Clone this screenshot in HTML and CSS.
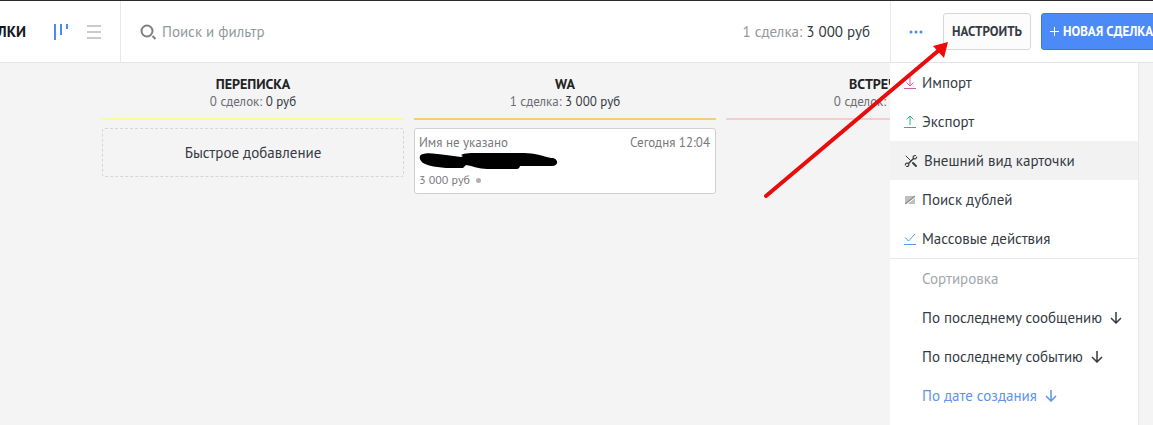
FILE: index.html
```
<!DOCTYPE html>
<html lang="ru">
<head>
  <meta charset="UTF-8" />
  <meta name="viewport" content="width=device-width, initial-scale=1.0" />
  <title>Сделки</title>
  <link rel="stylesheet" href="styles.css">
</head>
<body>
  <header class="topbar">
    <div class="topbar-left">
      <h1 class="title">ЛКИ</h1>
      <button class="view-btn" aria-label="Воронка">
        <svg width="16" height="18" viewBox="0 0 16 18" fill="none" stroke="#4c8bf7" stroke-width="2"><path d="M2 1v16M8 1v11M14 1v5"/></svg>
      </button>
      <button class="view-btn" aria-label="Список">
        <svg width="14" height="14" viewBox="0 0 14 14" fill="none" stroke="#c9cccf" stroke-width="2"><path d="M0 1h14M0 7h14M0 13h14"/></svg>
      </button>
    </div>
    <div class="search">
      <svg width="17" height="16" viewBox="0 0 17 16" fill="none" stroke="#7d7f82" stroke-width="2"><circle cx="7" cy="7" r="5.5"/><path d="M12.5 12l3 3"/></svg>
      <input type="text" class="search-input" placeholder="Поиск и фильтр" aria-label="Поиск и фильтр" />
      <div class="total">1 сделка: <span>3 000 руб</span></div>
    </div>
    <div class="actions">
      <button class="more" aria-label="Ещё">
        <svg width="14" height="4" viewBox="0 0 14 4" fill="#4c8bf7"><circle cx="2" cy="2" r="1.5"/><circle cx="7" cy="2" r="1.5"/><circle cx="12" cy="2" r="1.5"/></svg>
      </button>
      <button class="btn">НАСТРОИТЬ</button>
      <button class="btn btn-primary">
        <svg width="9" height="9" viewBox="0 0 9 9" stroke="#fff"><path d="M4.5 0v9M0 4.5h9"/></svg>
        НОВАЯ СДЕЛКА
      </button>
    </div>

    <nav class="menu">
      <button class="menu-item">
        <svg width="12" height="14" viewBox="0 0 12 14" fill="none" stroke="#cf5fa6"><path d="M6 1v9M2.5 6.5L6 10l3.5-3.5M0 12.5h12"/></svg>
        Импорт
      </button>
      <button class="menu-item">
        <svg width="12" height="14" viewBox="0 0 12 14" fill="none" stroke="#2fb18a"><path d="M6 10V1M2.5 4.5L6 1l3.5 3.5M0 12.5h12"/></svg>
        Экспорт
      </button>
      <button class="menu-item active">
        <svg width="14" height="14" viewBox="0 0 14 14" fill="none" stroke="#3a3c3f" stroke-linecap="round"><path d="M2 2l4.500 4.500" stroke-width="1"/><path d="M9 9l3 3" stroke-width="2"/><path d="M4.500 9.500L9.500 4.500" stroke-width="1.500"/><path d="M11.500 1.500C9.500 1.500 8.500 3 9.500 4.500c1.500 1 3 0 3.200-1.500M4.500 9.500C3 8.500 1.500 9.500 1.300 11M2.500 12.500c2 0 3-1.500 2-3" stroke-width="1.200"/></svg>
        Внешний вид карточки
      </button>
      <button class="menu-item">
        <svg width="12" height="14" viewBox="0 0 12 14"><path d="M1 3h10v8H1z" fill="#bcbebf"/><path d="M1 11L11 3" stroke="#77797c"/><path d="M2.500 11.500L12 4" stroke="#fff"/></svg>
        Поиск дублей
      </button>
      <button class="menu-item">
        <svg width="12" height="14" viewBox="0 0 12 14" fill="none" stroke="#5f94e6"><path d="M1 5.500l3.500 3.500L11 2M0 12.500h12"/></svg>
        Массовые действия
      </button>
      <div class="sort">
        <div class="sort-title">Сортировка</div>
        <button class="sort-item">По последнему сообщению
          <svg width="12" height="13" viewBox="0 0 12 13" fill="none" stroke="currentColor" stroke-width="1.500"><path d="M6 1v11M1 7l5 5 5-5"/></svg>
        </button>
        <button class="sort-item">По последнему событию
          <svg width="12" height="13" viewBox="0 0 12 13" fill="none" stroke="currentColor" stroke-width="1.500"><path d="M6 1v11M1 7l5 5 5-5"/></svg>
        </button>
        <button class="sort-item selected">По дате создания
          <svg width="12" height="13" viewBox="0 0 12 13" fill="none" stroke="currentColor" stroke-width="1.500"><path d="M6 1v11M1 7l5 5 5-5"/></svg>
        </button>
      </div>
    </nav>

    <svg class="arrow" width="184" height="158" viewBox="0 0 184 158"><path d="M2 155L174 10" stroke="#e80c0c" stroke-width="4" stroke-linecap="round"/><path d="M184 1L180 17 169 5z" fill="#f20808"/></svg>
  </header>

  <main class="board">
    <section class="column">
      <h2 class="column-title">ПЕРЕПИСКА</h2>
      <div class="column-sum">0 сделок: <span>0 руб</span></div>
      <div class="line yellow"></div>
      <button class="quick-add">Быстрое добавление</button>
    </section>
    <section class="column">
      <h2 class="column-title">WA</h2>
      <div class="column-sum">1 сделка: <span>3 000 руб</span></div>
      <div class="line orange"></div>
      <article class="card">
        <div class="card-head"><span>Имя не указано</span><span>Сегодня 12:04</span></div>
        <svg class="scribble" width="139" height="17" viewBox="0 0 139 17"><path d="M4 1C9-1 19 1 27 2l15 2 2-1-2-1C46 0 52 0 60 0h45c10 0 19 3 27 5 8 0 8 8 1 8l-32 0c-1 3-2 3-5 3H68c-8 0-14-3-21-4l-3 3H27C15 14 5 12 2 8 0 5 0 2 4 1z"/></svg>
        <div class="card-price">3 000 руб <i class="dot"></i></div>
      </article>
    </section>
    <section class="column">
      <h2 class="column-title">ВСТРЕЧА</h2>
      <div class="column-sum">0 сделок: <span>0 руб</span></div>
      <div class="line pink"></div>
    </section>
  </main>
</body>
</html>
```
FILE: styles.css
```
* {
  box-sizing: border-box;
}
body {
  margin: 0;
  min-height: 100vh;
  overflow: hidden;
  background: #f4f4f4;
  color: #363b44;
  font-family: "PT Sans", "Noto Sans", sans-serif;
  font-size: 15px;
}
button, input {
  font: inherit;
  color: inherit;
  border: 0;
  padding: 0;
  background: none;
}
svg {
  flex: none;
}
.topbar {
  position: relative;
  display: flex;
  height: 63px;
  background: #fff;
  border-top: 1px solid #2b2a2e;
  border-bottom: 1px solid #e4e5e6;
}
.topbar-left {
  display: flex;
  align-items: center;
  justify-content: flex-end;
  flex: none;
  width: 121px;
  padding-right: 19px;
  gap: 18px;
  overflow: hidden;
  border-right: 1px solid #e8e8e9;
}
.title {
  margin: 0 9px 0 0;
  font-size: 15px;
  color: #17181a;
}
.view-btn {
  display: flex;
}
.search {
  display: flex;
  align-items: center;
  flex: 1;
  min-width: 0;
  padding: 0 20px 0 19px;
  gap: 5px;
}
.search-input {
  flex: 1;
  min-width: 0;
  outline: 0;
}
.search-input::placeholder {
  color: #92989b;
  opacity: 1;
}
.total {
  color: #92989b;
}
.total span, .column-sum span {
  color: #363b44;
}
.actions {
  display: flex;
  align-items: center;
  flex: none;
  width: 263px;
  padding-left: 18px;
  overflow: hidden;
  border-left: 1px solid #e8e8e9;
}
.more {
  display: flex;
  margin-right: 20px;
}
.btn {
  flex: none;
  height: 37px;
  padding: 0 8px;
  border: 1px solid #d7d8da;
  border-radius: 3px;
  background: #fcfcfc;
  font-size: 13px;
  font-weight: bold;
  white-space: nowrap;
}
.btn-primary {
  display: flex;
  align-items: center;
  gap: 4px;
  margin-left: 10px;
  background: #4c8bf7;
  border-color: #4077d6;
  color: #fff;
}
.menu {
  position: absolute;
  top: 100%;
  right: 14px;
  width: 249px;
  min-height: calc(100vh - 62px);
  background: #fff;
  border-top: 1px solid #e4e5e6;
  border-right: 1px solid #e8e8e9;
  z-index: 1;
}
.menu-item, .sort-item {
  display: flex;
  align-items: center;
  width: 100%;
  height: 39px;
  white-space: nowrap;
}
.menu-item {
  padding-left: 14px;
  gap: 6px;
}
.menu-item.active {
  background: #f2f2f2;
}
.sort {
  padding: 0 0 12px 32px;
  border-top: 1px solid #e8e8e9;
}
.sort-title {
  line-height: 39px;
  color: #a2a7ab;
}
.sort-item {
  gap: 8px;
}
.sort-item.selected {
  color: #5c95ea;
}
.arrow {
  position: absolute;
  top: 40px;
  right: 205px;
  z-index: 2;
  pointer-events: none;
}
.board {
  display: flex;
  gap: 10px;
  padding: 12px 0 0 102px;
}
.column {
  flex: none;
  width: 302px;
  text-align: center;
}
.column-title {
  margin: 0;
  font-size: 14px;
  line-height: 18px;
  color: #202226;
}
.column-sum {
  font-size: 13px;
  line-height: 18px;
  color: #6b6d72;
}
.line {
  height: 2px;
  margin: 7px 0 8px;
}
.yellow {
  background: #fbfa9c;
}
.orange {
  background: #f6cc7a;
}
.pink {
  background: #fbcaca;
}
.quick-add {
  width: 100%;
  height: 49px;
  border: 1px dashed #d5d6d8;
  border-radius: 3px;
}
.card {
  padding: 5px 5px 4px 4px;
  background: #fff;
  border: 1px solid #cfd0d2;
  border-radius: 3px;
  text-align: left;
  font-size: 13px;
  line-height: 18px;
  color: #77797c;
}
.card-head {
  display: flex;
  justify-content: space-between;
}
.scribble {
  display: block;
  margin: 1px 0;
}
.card-price {
  display: flex;
  align-items: center;
  gap: 6px;
  font-size: 12px;
}
.dot {
  width: 5px;
  height: 5px;
  border-radius: 50%;
  background: #b0b2b4;
}
```
